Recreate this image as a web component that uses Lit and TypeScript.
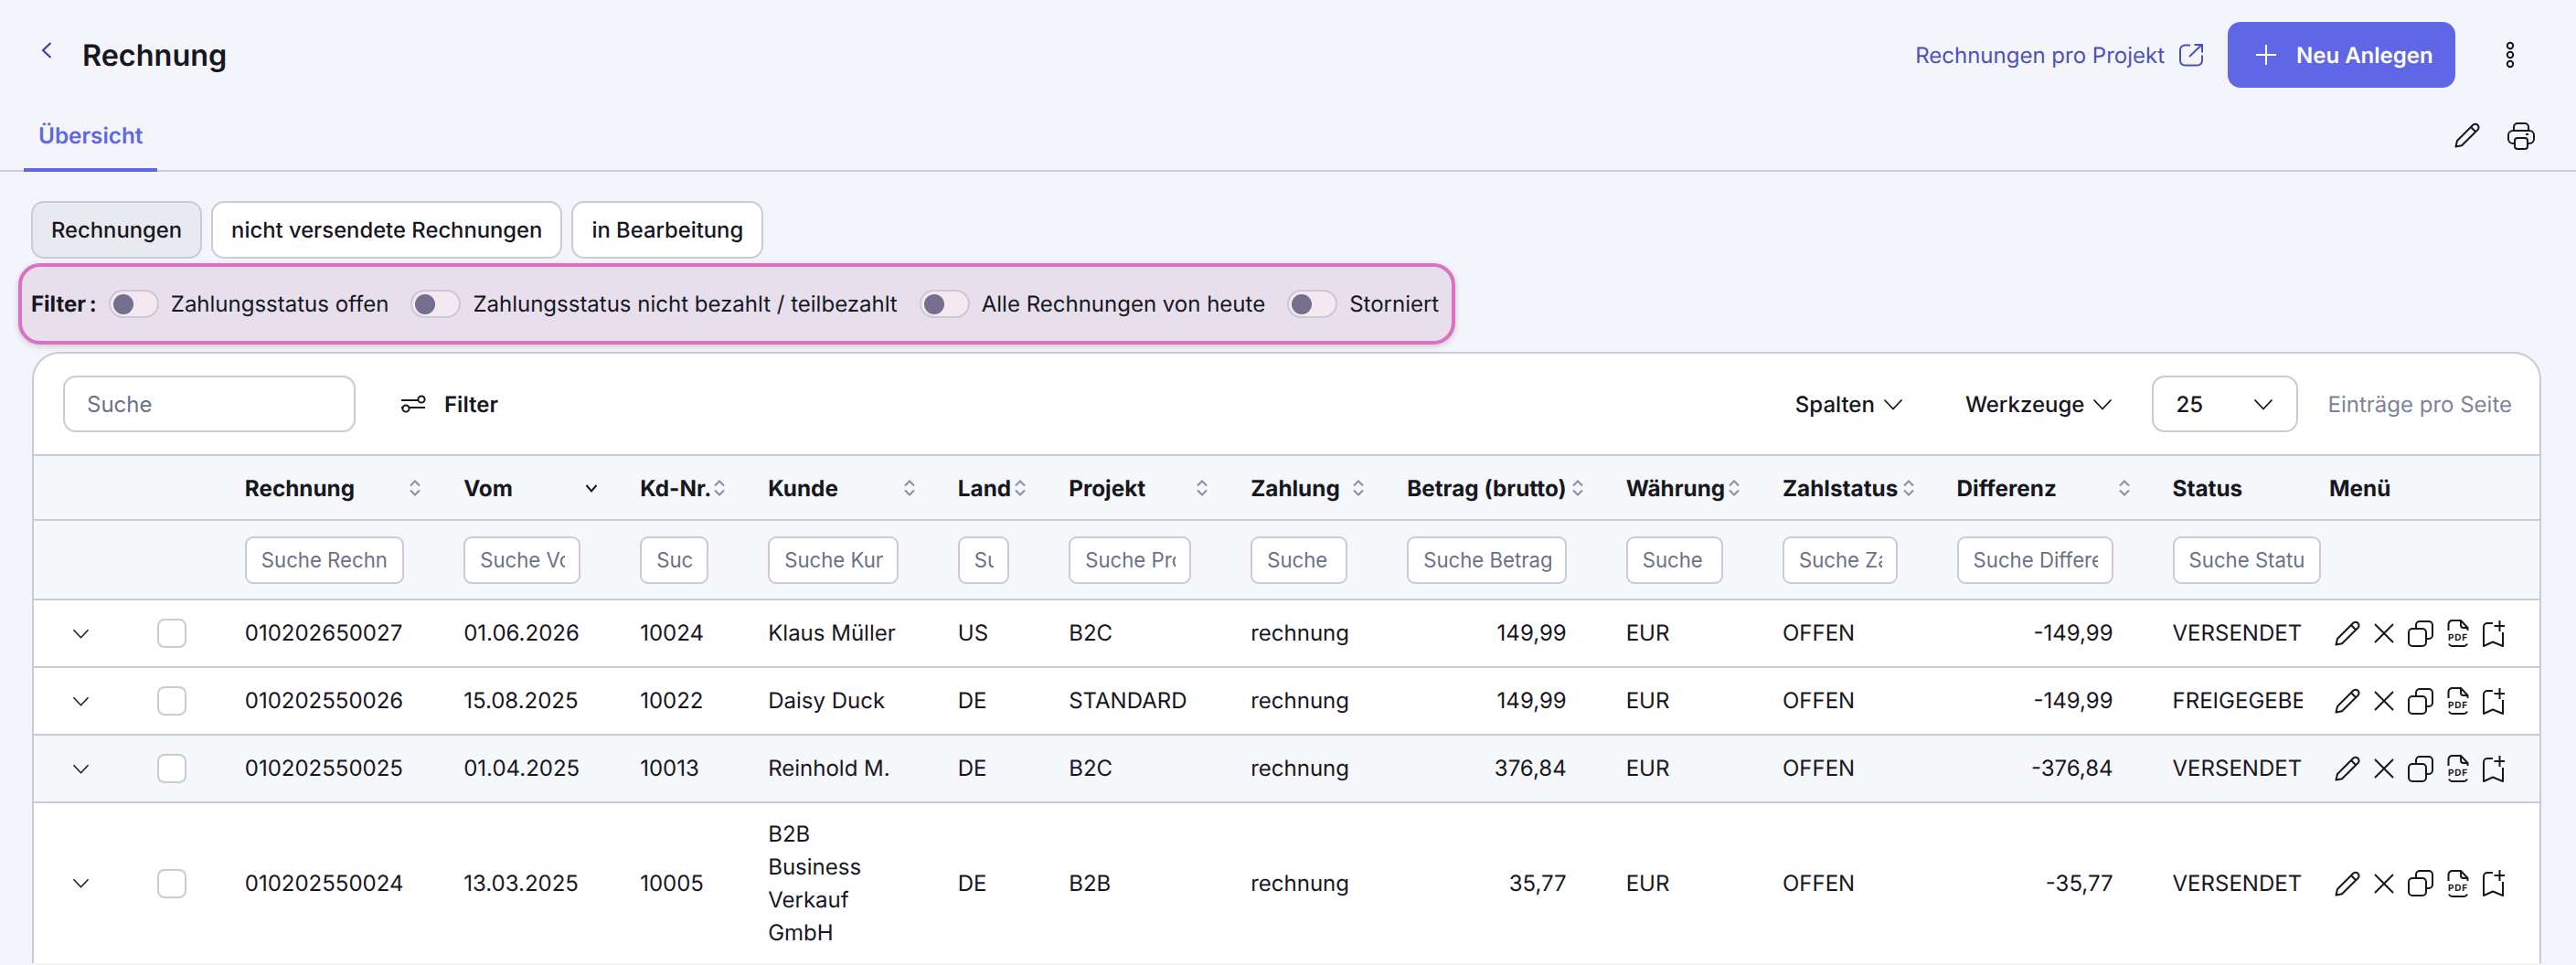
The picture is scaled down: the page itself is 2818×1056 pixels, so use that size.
import { LitElement, html, css } from 'lit';
import { customElement } from 'lit/decorators.js';

interface Column {
  title: string;
  sort?: 'both' | 'down';
  search?: string;
}

const columns: Column[] = [
  { title: 'Rechnung', sort: 'both', search: 'Suche Rechnung' },
  { title: 'Vom', sort: 'down', search: 'Suche Vom' },
  { title: 'Kd-Nr.', sort: 'both', search: 'Suche Kd-Nr.' },
  { title: 'Kunde', sort: 'both', search: 'Suche Kunde' },
  { title: 'Land', sort: 'both', search: 'Suche Land' },
  { title: 'Projekt', sort: 'both', search: 'Suche Projekt' },
  { title: 'Zahlung', sort: 'both', search: 'Suche Zahlung' },
  { title: 'Betrag (brutto)', sort: 'both', search: 'Suche Betrag (brutto)' },
  { title: 'Währung', sort: 'both', search: 'Suche Währung' },
  { title: 'Zahlstatus', sort: 'both', search: 'Suche Zahlstatus' },
  { title: 'Differenz', sort: 'both', search: 'Suche Differenz' },
  { title: 'Status', search: 'Suche Status' },
  { title: 'Menü' },
];

const rows = [
  ['010202650027', '01.06.2026', '10024', 'Klaus Müller', 'US', 'B2C', 'rechnung', '149,99', 'EUR', 'OFFEN', '-149,99', 'VERSENDET'],
  ['010202550026', '15.08.2025', '10022', 'Daisy Duck', 'DE', 'STANDARD', 'rechnung', '149,99', 'EUR', 'OFFEN', '-149,99', 'FREIGEGEBEN'],
  ['010202550025', '01.04.2025', '10013', 'Reinhold M.', 'DE', 'B2C', 'rechnung', '376,84', 'EUR', 'OFFEN', '-376,84', 'VERSENDET'],
  ['010202550024', '13.03.2025', '10005', 'B2B Business Verkauf GmbH', 'DE', 'B2B', 'rechnung', '35,77', 'EUR', 'OFFEN', '-35,77', 'VERSENDET'],
];

const filters = ['Zahlungsstatus offen', 'Zahlungsstatus nicht bezahlt / teilbezahlt', 'Alle Rechnungen von heute', 'Storniert'];

const chevron = (size = 22) => html`
  <svg width=${size} height=${Math.round(size * 0.6)} viewBox="0 0 22 13" fill="none" stroke="currentColor" stroke-width="1.800">
    <path d="M1.500 1.500 11 11.500 20.500 1.500" />
  </svg>`;

const sortIcon = (kind?: 'both' | 'down') => {
  if (kind === 'down') {
    return html`<svg class="sort dark" width="14" height="18" viewBox="0 0 14 18" fill="none" stroke="currentColor" stroke-width="2">
      <path d="M1.500 6 7 12.500 12.500 6" />
    </svg>`;
  }
  if (kind === 'both') {
    return html`<svg class="sort" width="14" height="18" viewBox="0 0 14 18" fill="none" stroke="currentColor" stroke-width="2">
      <path d="M2 6.500 7 1.500 12 6.500M2 11.500 7 16.500 12 11.500" />
    </svg>`;
  }
  return '';
};

const pencil = (size = 28) => html`
  <svg width=${size} height=${size} viewBox="0 0 28 28" fill="none" stroke="currentColor" stroke-width="2" stroke-linejoin="round">
    <path d="M1.500 26.500 3 20 20.500 2.500Q23 .8 25.500 2.800 27.600 5.400 25.500 8L8 25.300Z" />
    <path d="M18 5 23.200 10.200" />
  </svg>`;

const rowIcons = html`
  <div class="actions">
    ${pencil()}
    <svg width="22" height="22" viewBox="0 0 22 22" fill="none" stroke="currentColor" stroke-width="2">
      <path d="M1 1 21 21M21 1 1 21" />
    </svg>
    <svg width="28" height="29" viewBox="0 0 28 29" fill="none" stroke="currentColor" stroke-width="2">
      <rect x="1" y="9" width="19" height="19" rx="4" />
      <path d="M9 9V5a4 4 0 0 1 4-4h10a4 4 0 0 1 4 4v11a4 4 0 0 1-4 4h-3" />
    </svg>
    <svg width="24" height="30" viewBox="0 0 24 30" fill="none" stroke="currentColor" stroke-width="2">
      <path d="M1.500 12V5a4 4 0 0 1 4-4H15l7.500 8v3M15 1v5a3 3 0 0 0 3 3h4.500M2 26.500q1 2.500 4 2.500h12q3 0 4-2.500" />
      <text x="12" y="23" class="pdf" text-anchor="middle">PDF</text>
    </svg>
    <svg width="24" height="29" viewBox="0 0 24 29" fill="none" stroke="currentColor" stroke-width="2" stroke-linejoin="round">
      <path d="M11 3H5a4 4 0 0 0-4 4v21l10-4.500 11 4.500V13M18.500 0v12M12.500 6h11.500" />
    </svg>
  </div>`;

@customElement('app-root')
export class AppRoot extends LitElement {
  static styles = css`
    :host {
      display: block;
      height: 1056px;
      overflow: hidden;
      background: #f4f5fb;
      color: #17171f;
      font-family: Inter, 'Liberation Sans', sans-serif;
      font-size: 24px;
      text-rendering: geometricPrecision;
    }

    svg { display: block; flex: none; }

    .top {
      display: flex;
      align-items: center;
      height: 72px;
      padding: 24px 67px 0 45px;
    }
    .back { color: #4a2fa0; margin: -10px 33px 0 0; }
    h1 { margin: 0; font-size: 32.4px; font-weight: 600; }
    .link {
      display: flex;
      align-items: center;
      gap: 16px;
      margin-left: auto;
      color: #4b52b8;
    }
    .primary {
      display: flex;
      align-items: center;
      gap: 22px;
      box-sizing: border-box;
      width: 249px;
      height: 72px;
      margin-left: 27px;
      padding-left: 31px;
      border-radius: 14px;
      background: #5f67e6;
      color: #fff;
      font-weight: 600;
    }
    .dots { margin-left: 55px; }

    .tabs {
      display: flex;
      align-items: flex-end;
      justify-content: space-between;
      height: 90px;
      padding: 0 45px 0 26px;
      border-bottom: 2px solid #c9cbd6;
    }
    .tab {
      margin-bottom: -2px;
      padding: 0 16px 18px;
      border-bottom: 4px solid #5f67e6;
      color: #5f67e6;
      font-size: 24.3px;
      font-weight: 600;
      line-height: 36px;
    }
    .tools { display: flex; gap: 30px; padding-bottom: 22px; }

    .views { display: flex; gap: 10px; margin: 32px 0 0 34px; font-size: 23.8px; }
    .view {
      display: flex;
      align-items: center;
      height: 63px;
      box-sizing: border-box;
      padding: 0 20px;
      border: 2px solid #c9cbd6;
      border-radius: 14px;
      background: #fff;
      font-weight: 500;
    }
    .view.on { background: #e9eaef; }

    .filterbar {
      display: flex;
      align-items: center;
      box-sizing: border-box;
      width: 1572px;
      height: 89px;
      margin: 5px 0 8px 20px;
      padding-left: 10px;
      border: 4px solid #dc70c2;
      border-radius: 24px;
      background: #e7dfec;
      box-shadow: 0 2px 6px rgba(0, 0, 0, .18);
      white-space: nowrap;
    }
    .filterbar b { margin-right: 13px; font-weight: 700; word-spacing: -2px; }
    .filterbar label { display: flex; align-items: center; gap: 13px; margin-right: 24px; }
    .toggle {
      display: block;
      box-sizing: border-box;
      width: 55px;
      height: 31px;
      padding: 3px;
      border: 2px solid #c9c9d3;
      border-radius: 16px;
      background: #f4e8f1;
    }
    .toggle i {
      display: block;
      width: 22px;
      height: 22px;
      border-radius: 50%;
      background: #736f8c;
    }

    .card {
      margin: 0 38px 0 35px;
      border: 2px solid #c9cbd6;
      border-bottom: 0;
      border-radius: 30px 30px 0 0;
      background: #fff;
    }
    .bar {
      display: flex;
      align-items: center;
      height: 110px;
      padding: 0 30px 0 32px;
    }
    .bigsearch, .select {
      box-sizing: border-box;
      height: 62px;
      border: 2px solid #c9cbd6;
      border-radius: 14px;
      background: #fff;
    }
    .bigsearch {
      width: 320px;
      padding: 0 24px;
      font: inherit;
      color: inherit;
      outline: none;
    }
    input::placeholder { color: #6b7285; opacity: 1; }
    .filterbtn { display: flex; align-items: center; gap: 20px; margin-left: 50px; font-weight: 600; }
    .menu { display: flex; align-items: center; gap: 9px; font-weight: 500; }
    .menu.first { margin-left: auto; }
    .menu + .menu { margin-left: 68px; }
    .select {
      display: flex;
      align-items: center;
      justify-content: space-between;
      width: 160px;
      margin-left: 43px;
      padding: 0 25px 0 24px;
      font-weight: 500;
    }
    .hint { margin-left: 32px; color: #7c8497; }

    .row {
      display: grid;
      grid-template-columns: 102px 128.8px 239.4px 193px 140px 207.6px 121.4px 199px 171px 239.5px 171.3px 190.6px 236px 171.4px 1fr;
      align-items: center;
      border-top: 2px solid #c9cbd6;
      line-height: 36px;
    }
    .row.head { height: 69px; background: #f6f7fa; font-size: 24.3px; font-weight: 700; }
    .row.search { height: 85px; background: #f6f7fa; }
    .row.body { min-height: 72px; }
    .row.alt { background: #f6f7fa; }
    .row.tall { padding: 15.500px 0; }

    .hcell {
      display: flex;
      align-items: center;
      justify-content: space-between;
      padding-right: 46px;
      white-space: nowrap;
    }
    .sort { color: #8790a3; }
    .sort.dark { color: #17171f; }
    .search input {
      display: block;
      box-sizing: border-box;
      width: calc(100% - 65px);
      height: 52px;
      padding: 0 15px 0 16px;
      border: 2px solid #c9cbd6;
      border-radius: 9px;
      background: #fff;
      font: inherit;
      font-size: 22.2px;
      outline: none;
    }
    .search input.wide { width: 162px; }
    .expand { justify-self: center; }
    .check {
      box-sizing: border-box;
      width: 32px;
      height: 32px;
      margin-left: 33px;
      border: 2px solid #c9cbd6;
      border-radius: 8px;
      background: #fff;
    }
    .cell { padding-right: 65px; font-weight: 400; }
    .right { text-align: right; }
    .clip { display: block; width: 142px; overflow: hidden; white-space: nowrap; }
    .actions { display: flex; align-items: center; gap: 15px; margin-left: 6px; }
    .pdf { font: 700 10px Inter, 'Liberation Sans', sans-serif; letter-spacing: .8px; fill: currentColor; stroke: none; }
  `;

  private renderCell(value: string, i: number) {
    if (i === 7 || i === 10) return html`<div class="cell right">${value}</div>`;
    if (i === 11) return html`<div class="cell"><span class="clip">${value}</span></div>`;
    return html`<div class="cell">${value}</div>`;
  }

  render() {
    return html`
      <div class="top">
        <svg class="back" width="12" height="18" viewBox="0 0 12 18" fill="none" stroke="currentColor" stroke-width="2">
          <path d="M10.500 1 2 9 10.500 17" />
        </svg>
        <h1>Rechnung</h1>
        <div class="link">
          Rechnungen pro Projekt
          <svg width="26" height="25" viewBox="0 0 26 25" fill="none" stroke="currentColor" stroke-width="2">
            <path d="M12 1.500H6a5 5 0 0 0-5 5v12a5 5 0 0 0 5 5h14a5 5 0 0 0 5-5v-6" />
            <path d="M11 14 24 1.500M16.500 1H25v8.500" />
          </svg>
        </div>
        <div class="primary">
          <svg width="22" height="22" viewBox="0 0 22 22" fill="none" stroke="currentColor" stroke-width="2">
            <path d="M11 0v22M0 11h22" />
          </svg>
          Neu Anlegen
        </div>
        <svg class="dots" width="10" height="30" viewBox="0 0 10 30" fill="none" stroke="currentColor" stroke-width="2">
          <circle cx="5" cy="5" r="3.200" /><circle cx="5" cy="15" r="3.200" /><circle cx="5" cy="25" r="3.200" />
        </svg>
      </div>

      <div class="tabs">
        <div class="tab">Übersicht</div>
        <div class="tools">
          ${pencil()}
          <svg width="30" height="30" viewBox="0 0 30 30" fill="none" stroke="currentColor" stroke-width="2">
            <path d="M7 9V5a4 4 0 0 1 4-4h8a4 4 0 0 1 4 4v4" />
            <path d="M8 23H6a5 5 0 0 1-5-5v-4a5 5 0 0 1 5-5h18a5 5 0 0 1 5 5v4a5 5 0 0 1-5 5h-2" />
            <rect x="8" y="17" width="14" height="12" rx="3" />
            <path d="M20 13h3" />
          </svg>
        </div>
      </div>

      <div class="views">
        <div class="view on">Rechnungen</div>
        <div class="view">nicht versendete Rechnungen</div>
        <div class="view">in Bearbeitung</div>
      </div>

      <div class="filterbar">
        <b>Filter :</b>
        ${filters.map(f => html`<label><span class="toggle"><i></i></span>${f}</label>`)}
      </div>

      <div class="card">
        <div class="bar">
          <input class="bigsearch" placeholder="Suche" />
          <div class="filterbtn">
            <svg width="27" height="20" viewBox="0 0 27 20" fill="none" stroke="currentColor" stroke-width="2">
              <path d="M0 6h18M0 14h26" />
              <circle cx="22" cy="5" r="3.600" fill="#fff" /><circle cx="5" cy="15" r="3.600" fill="#fff" />
            </svg>
            Filter
          </div>
          <div class="menu first">Spalten ${chevron()}</div>
          <div class="menu">Werkzeuge ${chevron()}</div>
          <div class="select">25 ${chevron()}</div>
          <div class="hint">Einträge pro Seite</div>
        </div>

        <div class="row head">
          <div></div><div></div>
          ${columns.map(c => html`<div class="hcell"><span>${c.title}</span>${sortIcon(c.sort)}</div>`)}
        </div>
        <div class="row search">
          <div></div><div></div>
          ${columns.map(c => html`<div>${c.search
            ? html`<input class=${c.title === 'Status' ? 'wide' : ''} placeholder=${c.search} />`
            : ''}</div>`)}
        </div>
        ${rows.map((r, n) => html`
          <div class="row body ${n === 2 ? 'alt' : ''} ${n === 3 ? 'tall' : ''}">
            <div class="expand">${chevron(19)}</div>
            <div class="check"></div>
            ${r.map((v, i) => this.renderCell(v, i))}
            ${rowIcons}
          </div>`)}
      </div>
    `;
  }
}
